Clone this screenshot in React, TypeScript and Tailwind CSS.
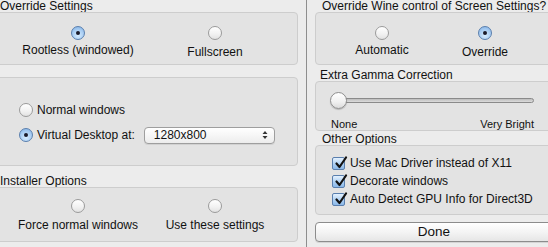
import React from "react";

const font = "font-['Liberation_Sans','DejaVu_Sans',sans-serif]";

function Radio({ on }: { on?: boolean }) {
    return (
        <span
            className={
                "relative inline-flex items-center justify-center w-[14px] h-[14px] rounded-full border shrink-0 " +
                (on
                    ? "border-[#5a7fae] bg-[radial-gradient(circle_at_50%_70%,#d6ecff_0%,#a8cdf3_55%,#7eaee2_100%)]"
                    : "border-[#9b9b9b] bg-[linear-gradient(#ffffff,#f1f1f1_60%,#e2e2e2)]")
            }
        >
            {on && <span className="w-[4px] h-[4px] rounded-full bg-[#1b1b2a]" />}
        </span>
    );
}

function Check() {
    return (
        <span className="relative inline-flex w-[13px] h-[13px] rounded-[2px] border border-[#5a7fae] bg-[linear-gradient(#e4f1fe,#a9cdf2_60%,#8bb8e8)] shrink-0">
            <svg viewBox="0 0 14 14" className="absolute -top-[2px] left-[1px] w-[14px] h-[14px]">
                <path d="M2.5 7.5 L5.5 11 L12 1.5" fill="none" stroke="#121212" strokeWidth="2.2" strokeLinecap="round" strokeLinejoin="round" />
            </svg>
        </span>
    );
}

function Box({ className = "", children }: { className?: string; children?: React.ReactNode }) {
    return (
        <div className={"rounded-[4px] border border-[#cdcdcd] bg-[#e3e3e3] " + className}>{children}</div>
    );
}

function Choice({ label, on, lift }: { label: string; on?: boolean; lift?: boolean }) {
    return (
        <div className="flex flex-col items-center">
            <Radio on={on} />
            <span className={"text-[12px] text-[#111] leading-none whitespace-nowrap " + (lift ? "mt-[4px]" : "mt-[6px]")}>{label}</span>
        </div>
    );
}

export default function App() {
    return (
        <div className={"w-[548px] h-[247px] bg-[#ececec] flex overflow-hidden text-[#111] " + font}>
            {/* left column */}
            <div className="w-[306px] -ml-[8px] shrink-0 flex flex-col">
                <div className="h-[12px] pl-[8px] text-[12px] leading-[12px]">Override Settings</div>
                <Box className="h-[53px] flex pt-[13px]">
                    <div className="w-[170px] flex justify-center"><Choice label="Rootless (windowed)" on lift /></div>
                    <div className="w-[104px] flex justify-center"><Choice label="Fullscreen" /></div>
                </Box>
                <Box className="h-[89px] mt-[12px] flex flex-col justify-center gap-[10px] pl-[26px] pt-[3px]">
                    <div className="flex items-center gap-[4px]">
                        <Radio />
                        <span className="text-[12px] leading-none">Normal windows</span>
                    </div>
                    <div className="flex items-center gap-[4px]">
                        <Radio on />
                        <span className="text-[12px] leading-none">Virtual Desktop at:</span>
                        <div className="ml-[5px] w-[131px] h-[17px] rounded-[4px] border border-[#9e9e9e] bg-[linear-gradient(#ffffff,#f6f6f6_50%,#ececec)] flex items-center pl-[9px] pr-[6px] shadow-[0_1px_0_rgba(0,0,0,0.08)]">
                            <span className="text-[12px] leading-none flex-1">1280x800</span>
                            <svg viewBox="0 0 6 10" className="w-[6px] h-[10px]">
                                <path d="M0.5 4 L3 1 L5.5 4 Z M0.5 6 L3 9 L5.5 6 Z" fill="#333" />
                            </svg>
                        </div>
                    </div>
                </Box>
                <div className="h-[21px] pl-[8px] flex items-end text-[12px] leading-none">Installer Options</div>
                <Box className="h-[55px] flex pt-[11px]">
                    <div className="w-[170px] flex justify-center"><Choice label="Force normal windows" /></div>
                    <div className="w-[104px] flex justify-center"><Choice label="Use these settings" /></div>
                </Box>
            </div>

            {/* separator */}
            <div className="ml-[8px] w-px bg-[#8e8e8e] shrink-0" />

            {/* right column */}
            <div className="ml-[8px] w-[242px] shrink-0 flex flex-col">
                <div className="h-[12px] pl-[7px] text-[12px] leading-[12px] whitespace-nowrap">Override Wine control of Screen Settings?</div>
                <Box className="h-[53px] flex pt-[13px]">
                    <div className="w-[132px] flex justify-center"><Choice label="Automatic" lift /></div>
                    <div className="w-[74px] flex justify-center"><Choice label="Override" on /></div>
                </Box>
                <div className="h-[16px] pl-[5px] flex items-end text-[12px] leading-none">Extra Gamma Correction</div>
                <Box className="h-[50px] flex flex-col pl-[15px] pr-[22px] pt-[10px]">
                    <div className="relative h-[17px] flex items-center">
                        <div className="w-full h-[5px] rounded-full border border-[#8a8a8a] bg-[linear-gradient(#bdbdbd,#dcdcdc)]" />
                        <div className="absolute -left-[1px] top-0 w-[17px] h-[17px] rounded-full border border-[#8f8f8f] bg-[linear-gradient(#ffffff,#f0f0f0_60%,#dcdcdc)] shadow-[0_1px_1px_rgba(0,0,0,0.2)]" />
                    </div>
                    <div className="flex justify-between mt-[11px] text-[11px] leading-none">
                        <span>None</span>
                        <span>Very Bright</span>
                    </div>
                </Box>
                <div className="h-[14px] pl-[7px] flex items-end text-[12px] leading-none">Other Options</div>
                <Box className="h-[70px] flex flex-col pl-[16px] pt-[10px] gap-[4px]">
                    {["Use Mac Driver instead of X11", "Decorate windows", "Auto Detect GPU Info for Direct3D"].map((t) => (
                        <div key={t} className="flex items-center gap-[5px]">
                            <Check />
                            <span className="text-[12px] leading-[14px] whitespace-nowrap">{t}</span>
                        </div>
                    ))}
                </Box>
                <button className="mt-[7px] h-[20px] rounded-[4px] border border-[#8c8c8c] bg-[linear-gradient(#ffffff,#f4f4f4_50%,#e6e6e6)] shadow-[0_1px_0_rgba(0,0,0,0.1)] text-[13.5px] leading-none flex items-center justify-center pr-[4px]">
                    Done
                </button>
            </div>
        </div>
    );
}
